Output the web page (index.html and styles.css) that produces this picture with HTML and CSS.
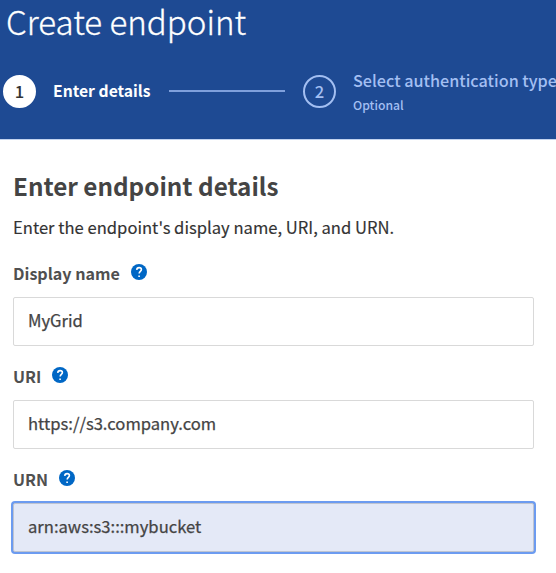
FILE: index.html
```html
<!DOCTYPE html>
<html lang="en">
<head>
<meta charset="utf-8">
<title>Create endpoint</title>
<link rel="stylesheet" href="styles.css">
</head>
<body>
<header class="banner">
  <h1 class="title">Create endpoint</h1>
  <ol class="steps">
    <li class="step step-active"><span class="step-number">1</span><span class="step-label">Enter details</span></li>
    <li class="step-line" role="presentation"></li>
    <li class="step step-next"><span class="step-number">2</span><span class="step-text"><span class="step-label">Select authentication type</span><small class="step-note">Optional</small></span></li>
  </ol>
</header>
<main class="content">
  <h2 class="heading">Enter endpoint details</h2>
  <p class="intro">Enter the endpoint's display name, URI, and URN.</p>
  <form class="form">
    <div class="field">
      <div class="field-head"><label class="label" for="name">Display name</label>
        <svg class="help" viewBox="0 0 16 16"><circle cx="8" cy="8" r="8"/><path d="M5.7 5.9C5.8 4.4 6.8 3.6 8.1 3.6c1.4 0 2.3.8 2.3 2 0 1.7-2.2 1.8-2.2 3.8"/><path d="M8.1 11.4v1.7"/></svg></div>
      <input class="input" id="name" type="text" value="MyGrid">
    </div>
    <div class="field">
      <div class="field-head"><label class="label" for="uri">URI</label>
        <svg class="help" viewBox="0 0 16 16"><circle cx="8" cy="8" r="8"/><path d="M5.7 5.9C5.8 4.4 6.8 3.6 8.1 3.6c1.4 0 2.3.8 2.3 2 0 1.7-2.2 1.8-2.2 3.8"/><path d="M8.1 11.4v1.7"/></svg></div>
      <input class="input" id="uri" type="text" value="https://s3.company.com">
    </div>
    <div class="field">
      <div class="field-head"><label class="label" for="urn">URN</label>
        <svg class="help" viewBox="0 0 16 16"><circle cx="8" cy="8" r="8"/><path d="M5.7 5.9C5.8 4.4 6.8 3.6 8.1 3.6c1.4 0 2.3.8 2.3 2 0 1.7-2.2 1.8-2.2 3.8"/><path d="M8.1 11.4v1.7"/></svg></div>
      <input class="input input-focus" id="urn" type="text" value="arn:aws:s3:::mybucket">
    </div>
  </form>
</main>
</body>
</html>
```
FILE: styles.css
```css
* { box-sizing: border-box; }
body {
  margin: 0;
  min-height: 573px;
  background: #fff;
  color: #444;
  font-family: "Noto Sans CJK SC", "Open Sans", sans-serif;
  font-size: 16.6px;
  overflow-x: hidden;
}
.banner {
  height: 140px;
  padding: 0 0 0 3px;
  border-bottom: 1px solid #c3d3ef;
  background: #1e4a93;
  color: #fff;
}
.title {
  margin: 0 0 0 3px;
  font-size: 33.1px;
  font-weight: 300;
  line-height: 42px;
  white-space: nowrap;
  -webkit-text-stroke: 0.3px #fff;
}
.steps {
  display: flex;
  align-items: center;
  height: 52px;
  margin: 23px 0 0;
  padding: 0;
  list-style: none;
  white-space: nowrap;
}
.step { display: flex; align-items: center; flex: none; gap: 17px; }
.step-number {
  display: flex;
  align-items: center;
  justify-content: center;
  width: 33px;
  height: 33px;
  border: 2px solid #fff;
  border-radius: 50%;
  background: #fff;
  color: #333;
  font-weight: 500;
  line-height: 24px;
}
.step-active { width: 166px; }
.step-active .step-label { font-size: 15.7px; font-weight: 700; }
.step-label { font-size: 16.2px; font-weight: 500; line-height: 24px; }
.step-line { flex: none; width: 116px; height: 2px; margin: 0 18px 0 0; background: #7fa0dc; }
.step-next { color: #a3bff2; }
.step-next .step-number { background: none; border-color: #a3bff2; color: #a3bff2; }
.step-text { display: flex; flex-direction: column; }
.step-next .step-text { margin-top: 2px; }
.step-note { font-size: 12.2px; font-weight: 500; line-height: 26px; margin-bottom: -2px; }
.content { padding: 31px 22px 0 13px; }
.heading { margin: 0; color: #444; font-size: 24.25px; font-weight: 700; line-height: 30px; white-space: nowrap; }
.intro { margin: 14px 0 0; color: #333; line-height: 24px; white-space: nowrap; -webkit-text-stroke: 0.15px #333; }
.form { display: flex; flex-direction: column; gap: 18px; margin-top: 22px; }
.field-head { display: flex; align-items: center; gap: 11px; height: 24px; margin-bottom: 12px; }
.label { color: #505050; font-size: 16.1px; font-weight: 700; line-height: 24px; }
.help { width: 16px; height: 16px; margin-bottom: 2px; fill: #0067c5; }
.help path { fill: none; stroke: #fff; stroke-width: 1.6; }
.input {
  display: block;
  width: 521px;
  height: 49px;
  padding: 0 14px 4px;
  border: 1px solid #d9d9d9;
  border-radius: 2px;
  outline: none;
  background: #fff;
  color: #444;
  font: inherit;
  -webkit-text-stroke: 0.25px #444;
}
.input-focus { background: #e4e9f7; border-color: #bfc4d0; box-shadow: 0 0 0 2px #6c9bf0; }
```
